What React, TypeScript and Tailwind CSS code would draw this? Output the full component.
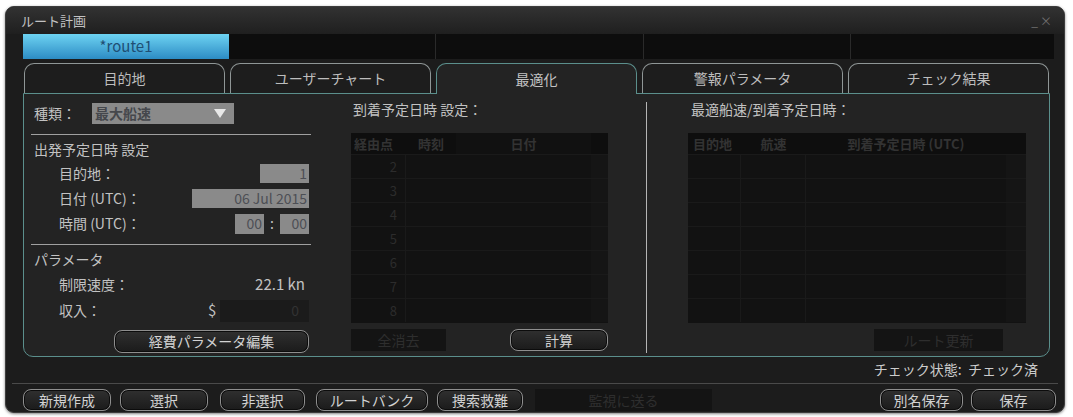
import React from 'react';

const font = { fontFamily: '"Noto Sans CJK JP", "Noto Sans", sans-serif' };

const Btn = ({ label, className = '' }: { label: string; className?: string }) => (
  <div
    className={`h-[22px] rounded-[8px] border border-[#8e8e8e] bg-linear-to-b from-[#303030] to-[#1b1b1b] flex items-center justify-center text-[14px] text-[#d2d2d2] shadow-[inset_0_0_0_1px_#0c0c0c] ${className}`}
  >
    {label}
  </div>
);

const DimBtn = ({ label, className = '' }: { label: string; className?: string }) => (
  <div className={`h-[22px] bg-[#141414] flex items-center justify-center text-[14px] text-[#2e2e2e] ${className}`}>
    {label}
  </div>
);

const Tab = ({ label, active }: { label: string; active?: boolean }) => (
  <div
    className={
      active
        ? 'flex-1 h-[31px] -mb-px relative z-10 rounded-t-[10px] border border-b-0 border-[#5b8f8c] bg-[#232323] flex items-center justify-center text-[14px] text-[#c2c2c2]'
        : 'flex-1 h-[30px] rounded-t-[10px] border border-b-0 border-[#8f9696] bg-[#1d1d1d] flex items-center justify-center text-[14px] text-[#bdbdbd]'
    }
  >
    {label}
  </div>
);

const Field = ({ value, className = '' }: { value: string; className?: string }) => (
  <div className={`h-[19px] bg-[#8a8a8a] flex items-center justify-end pr-[2px] text-[14px] text-[#4d4f55] ${className}`}>
    {value}
  </div>
);

const rows = [2, 3, 4, 5, 6, 7, 8];

const MidTable = () => (
  <div className="w-[257px] h-[190px] bg-[#121212] flex flex-col">
    <div className="h-[21px] flex items-center bg-[#0e0e0e] text-[13px] font-bold text-[#333333]">
      <div className="w-[55px] pl-[3px]">経由点</div>
      <div className="w-[50px] text-center">時刻</div>
      <div className="flex-1 h-full flex items-center justify-center bg-[#111111]">日付</div>
      <div className="w-[17px]" />
    </div>
    {rows.map((n) => (
      <div key={n} className="h-[24px] flex border-t border-[#1a1a1a]">
        <div className="w-[55px] flex items-center justify-end pr-[8px] text-[13px] text-[#2c2c2c] border-r border-[#1a1a1a]">
          {n}
        </div>
        <div className="w-[50px]" />
        <div className="flex-1" />
        <div className="w-[17px] bg-[#151515]" />
      </div>
    ))}
  </div>
);

const RightTable = () => (
  <div className="w-[338px] h-[190px] bg-[#121212] flex flex-col">
    <div className="h-[21px] flex items-center bg-[#0e0e0e] text-[13px] font-bold text-[#333333]">
      <div className="w-[53px] pl-[5px]">目的地</div>
      <div className="w-[65px] text-center">航速</div>
      <div className="flex-1 text-center">到着予定日時 (UTC)</div>
      <div className="w-[20px]" />
    </div>
    {rows.map((n) => (
      <div key={n} className="h-[24px] flex border-t border-[#1a1a1a]">
        <div className="w-[53px] border-r border-[#1a1a1a]" />
        <div className="w-[65px] border-r border-[#1a1a1a]" />
        <div className="flex-1" />
        <div className="w-[20px] bg-[#151515]" />
      </div>
    ))}
  </div>
);

export default function App() {
  return (
    <div className="w-[1073px] h-[417px] bg-white pl-[5px] pt-[6px]" style={font}>
      <div className="w-[1060px] h-[407px] rounded-[9px] bg-[#1c1c1c] border border-[#3c3c3c] shadow-[0_1px_3px_rgba(0,0,0,0.5)] flex flex-col overflow-hidden">
        {/* title bar */}
        <div className="h-[27px] shrink-0 bg-linear-to-b from-[#323232] to-[#1f1f1f] flex items-center justify-between pl-[15px] pr-[10px]">
          <span className="text-[13px] text-[#c2c2c2]">ルート計画</span>
          <span className="text-[12px] text-[#6f6f6f] tracking-[2px]">_×</span>
        </div>

        {/* route tabs */}
        <div className="h-[25px] shrink-0 ml-[17px] mr-[10px] flex bg-[#0d0d0d]">
          <div className="w-[206px] bg-linear-to-b from-[#6dd3f2] to-[#2c8cc4] flex items-center justify-center text-[15px] text-[#1f4f74]">
            *route1
          </div>
          <div className="w-[207px] border-r border-[#2a2a2a]" />
          <div className="w-[208px] border-r border-[#2a2a2a]" />
          <div className="w-[207px] border-r border-[#2a2a2a]" />
          <div className="flex-1" />
        </div>

        {/* function tabs */}
        <div className="mt-[4px] ml-[18px] mr-[15px] flex gap-[5px] items-end">
          <Tab label="目的地" />
          <Tab label="ユーザーチャート" />
          <Tab label="最適化" active />
          <Tab label="警報パラメータ" />
          <Tab label="チェック結果" />
        </div>

        {/* panel */}
        <div className="h-[264px] shrink-0 ml-[17px] mr-[14px] border border-[#5b8f8c] rounded-b-[10px] bg-[#232323] flex">
          {/* left */}
          <div className="w-[295px] pl-[10px] pr-[10px] pt-[9px] flex flex-col text-[14px] text-[#c2c2c2]">
            <div className="h-[21px] flex items-center">
              <span className="w-[58px]">種類：</span>
              <div className="w-[142px] h-[21px] bg-[#8a8a8a] flex items-center justify-between pl-[3px] pr-[8px]">
                <span className="text-[#45474c] font-bold">最大船速</span>
                <svg width="12" height="9" viewBox="0 0 12 9">
                  <path d="M0 0 L12 0 L6 9 Z" fill="#e8e8e8" />
                </svg>
              </div>
            </div>
            <div className="h-px bg-[#a0a0a0] mt-[10px] -ml-[3px] mr-[-2px]" />
            <div className="h-[16px] mt-[6px] flex items-center">出発予定日時 設定</div>
            <div className="mt-[4px] pl-[25px] flex flex-col">
              <div className="h-[25px] flex items-center justify-between">
                <span>目的地：</span>
                <Field value="1" className="w-[49px]" />
              </div>
              <div className="h-[25px] flex items-center justify-between">
                <span>日付 (UTC)：</span>
                <Field value="06 Jul 2015" className="w-[117px]" />
              </div>
              <div className="h-[25px] flex items-center justify-between">
                <span>時間 (UTC)：</span>
                <div className="flex items-center">
                  <Field value="00" className="w-[29px] h-[20px]" />
                  <span className="w-[16px] text-center">:</span>
                  <Field value="00" className="w-[29px] h-[20px]" />
                </div>
              </div>
            </div>
            <div className="h-px bg-[#a0a0a0] mt-[8px] -ml-[3px] mr-[-2px]" />
            <div className="h-[16px] mt-[6px] flex items-center">パラメータ</div>
            <div className="mt-[5px] pl-[25px] flex flex-col">
              <div className="h-[25px] flex items-center justify-between">
                <span>制限速度：</span>
                <span className="text-[15px] pr-[4px]">22.1 kn</span>
              </div>
              <div className="h-[27px] flex items-center justify-between">
                <span>収入：</span>
                <div className="flex items-center">
                  <span className="text-[15px] w-[12px]">$</span>
                  <div className="w-[89px] h-[22px] bg-[#1b1b1b] flex items-center justify-end pr-[10px] text-[#323232]">
                    0
                  </div>
                </div>
              </div>
            </div>
            <Btn label="経費パラメータ編集" className="mt-[6px] ml-[80px] w-[195px] h-[23px]" />
          </div>

          {/* middle */}
          <div className="w-[327px] pl-[32px] pt-[7px] flex flex-col">
            <div className="h-[16px] pl-[2px] flex items-center text-[14px] text-[#c2c2c2]">到着予定日時 設定：</div>
            <div className="mt-[16px]">
              <MidTable />
            </div>
            <div className="w-[257px] mt-[6px] flex justify-between">
              <DimBtn label="全消去" className="w-[95px]" />
              <Btn label="計算" className="w-[98px]" />
            </div>
          </div>

          {/* divider */}
          <div className="w-px mt-[8px] mb-[3px] bg-[#b5b5b5]" />

          {/* right */}
          <div className="flex-1 pl-[41px] pt-[7px] flex flex-col">
            <div className="h-[16px] pl-[3px] flex items-center text-[14px] text-[#c2c2c2]">最適船速/到着予定日時：</div>
            <div className="mt-[16px]">
              <RightTable />
            </div>
            <div className="mt-[6px] pl-[186px]">
              <DimBtn label="ルート更新" className="w-[129px]" />
            </div>
          </div>
        </div>

        {/* status */}
        <div className="h-[25px] shrink-0 flex items-center justify-end pr-[26px] text-[14px] text-[#cccccc]">
          チェック状態:&nbsp;&nbsp;チェック済
        </div>
        <div className="h-px shrink-0 mt-[1px] mx-[6px] bg-[#4a4a4a]" />

        {/* bottom buttons */}
        <div className="mt-[5px] pl-[17px] pr-[8px] flex items-center">
          <Btn label="新規作成" className="w-[88px]" />
          <Btn label="選択" className="w-[88px] ml-[9px]" />
          <Btn label="非選択" className="w-[85px] ml-[12px]" />
          <Btn label="ルートバンク" className="w-[112px] ml-[11px]" />
          <Btn label="捜索救難" className="w-[86px] ml-[9px]" />
          <DimBtn label="監視に送る" className="w-[177px] ml-[12px]" />
          <div className="flex-1" />
          <Btn label="別名保存" className="w-[83px]" />
          <Btn label="保存" className="w-[85px] ml-[8px]" />
        </div>
      </div>
    </div>
  );
}
